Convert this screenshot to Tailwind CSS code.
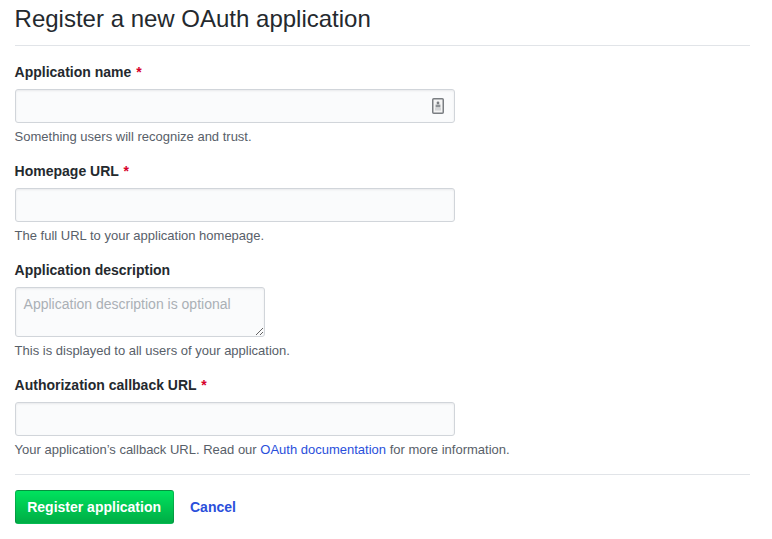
<!DOCTYPE html>
<html lang="en">
<head>
<meta charset="utf-8">
<title>Register a new OAuth application</title>
<script src="https://cdn.jsdelivr.net/npm/@tailwindcss/browser@4"></script>
</head>
<body class="bg-white font-['Liberation_Sans',Arial,sans-serif] text-[14px] leading-[21px] text-[#24292e]">
<div class="w-[772px] h-[539px] overflow-hidden pl-[14.6px]">
  <div class="w-[735.6px] h-[46px] border-b border-[#e1e4e8]">
    <h1 class="text-[24px] leading-[38px] font-normal">Register a new OAuth application</h1>
  </div>
  <form class="pt-[16px]">
    <div class="mb-[15px]">
      <label class="block font-semibold mb-[6px]">Application name <span class="ml-[1px] text-[#d7002a]">*</span></label>
      <div class="relative w-[440px]">
        <input type="text" class="block w-[440px] h-[34px] px-[8px] bg-[#fafbfc] border border-[#d1d5da] rounded-[3px] shadow-[inset_0_1px_2px_rgba(27,31,35,0.075)]">
        <svg class="absolute right-[11px] top-[9px]" width="12" height="16" viewBox="0 0 12 16" aria-hidden="true">
          <rect x="0.75" y="0.75" width="10.5" height="14.5" rx="1" fill="#f4f4f4" stroke="#7a7e82" stroke-width="1.5"/>
          <circle cx="6" cy="5" r="1.4" fill="#7a7e82"/>
          <rect x="3.6" y="6.6" width="4.8" height="2.8" fill="#8f9397"/>
          <rect x="3" y="9.6" width="6" height="3" fill="#d4d6d8"/>
        </svg>
      </div>
      <p class="mt-[5px] text-[13px] leading-[18px] text-[#586069]">Something users will recognize and trust.</p>
    </div>
    <div class="mb-[15px]">
      <label class="block font-semibold mb-[6px]">Homepage URL <span class="ml-[1px] text-[#d7002a]">*</span></label>
      <input type="text" class="block w-[440px] h-[34px] px-[8px] bg-[#fafbfc] border border-[#d1d5da] rounded-[3px] shadow-[inset_0_1px_2px_rgba(27,31,35,0.075)]">
      <p class="mt-[5px] text-[13px] leading-[18px] text-[#586069]">The full URL to your application homepage.</p>
    </div>
    <div class="mb-[15px]">
      <label class="block font-semibold mb-[6px]">Application description</label>
      <textarea placeholder="Application description is optional" class="block w-[250px] h-[50px] min-h-0 py-[6px] px-[8px] text-[14px] leading-[20px] bg-[#fafbfc] border border-[#d1d5da] rounded-[3px] shadow-[inset_0_1px_2px_rgba(27,31,35,0.075)] placeholder:text-[#aab0b6]"></textarea>
      <p class="mt-[5px] text-[13px] leading-[18px] text-[#586069]">This is displayed to all users of your application.</p>
    </div>
    <div class="mb-[15px]">
      <label class="block font-semibold mb-[6px]">Authorization callback URL <span class="ml-[1px] text-[#d7002a]">*</span></label>
      <input type="text" class="block w-[440px] h-[34px] px-[8px] bg-[#fafbfc] border border-[#d1d5da] rounded-[3px] shadow-[inset_0_1px_2px_rgba(27,31,35,0.075)]">
      <p class="mt-[5px] text-[13px] leading-[18px] text-[#586069]">Your application’s callback URL. Read our <a href="#" class="text-[#2a4fdb]">OAuth documentation</a> for more information.</p>
    </div>
    <div class="w-[735.6px] border-t border-[#e1e4e8] pt-[15px] flex items-center gap-[16.4px]">
      <button type="button" class="h-[34px] w-[159px] rounded-[3px] border border-[rgba(27,31,35,0.2)] bg-gradient-to-b from-[#00e35e] to-[#00ad45] text-white font-semibold text-[14px]">Register application</button>
      <a href="#" class="font-semibold text-[#2a4fdb]">Cancel</a>
    </div>
  </form>
</div>
</body>
</html>
